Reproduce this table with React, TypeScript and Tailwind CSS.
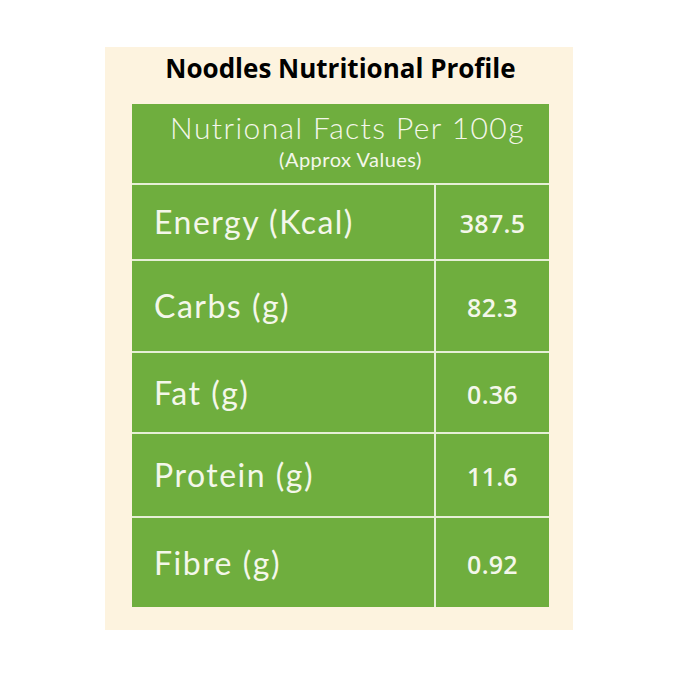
const rows = [
  { label: "Energy (Kcal)", value: "387.5", h: "h-[74px]" },
  { label: "Carbs (g)", value: "82.3", h: "h-[90px]" },
  { label: "Fat (g)", value: "0.36", h: "h-[79px]" },
  { label: "Protein (g)", value: "11.6", h: "h-[82px]" },
  { label: "Fibre (g)", value: "0.92", h: "h-[89px]" },
];

export default function App() {
  return (
    <div className="w-[679px] h-[679px] bg-white pt-[47px] pl-[105px]">
      <div className="w-[468px] h-[583px] bg-[#fdf3df] px-[24px] pl-[27px] flex flex-col">
        <h1 className="h-[57px] pt-[6px] leading-[30px] text-center font-['Open_Sans',sans-serif] font-bold text-[26px] text-black">
          Noodles Nutritional Profile
        </h1>
        <div className="grid grid-cols-[302px_113px] gap-[2px] bg-[#e6efd6] font-['Lato',sans-serif] text-[#f4f7ea]">
          <div className="col-span-2 h-[79px] bg-[#6fae3e] flex flex-col items-center pt-[3px]">
            <div className="pl-[14px] text-[30px] font-light leading-[40px] tracking-[1.4px]">
              Nutrional Facts Per 100g
            </div>
            <div className="pl-[20px] text-[20px] leading-[24px] tracking-[0.5px]">
              (Approx Values)
            </div>
          </div>
          {rows.map((r) => (
            <div key={r.label} className="contents">
              <div className={`${r.h} bg-[#6fae3e] flex items-center pl-[22px] text-[32px] tracking-[1.5px]`}>
                {r.label}
              </div>
              <div className={`${r.h} bg-[#6fae3e] flex items-center justify-center pt-[4px] font-['Open_Sans',sans-serif] font-semibold text-[25px] tracking-[0.3px]`}>
                {r.value}
              </div>
            </div>
          ))}
        </div>
      </div>
    </div>
  );
}
